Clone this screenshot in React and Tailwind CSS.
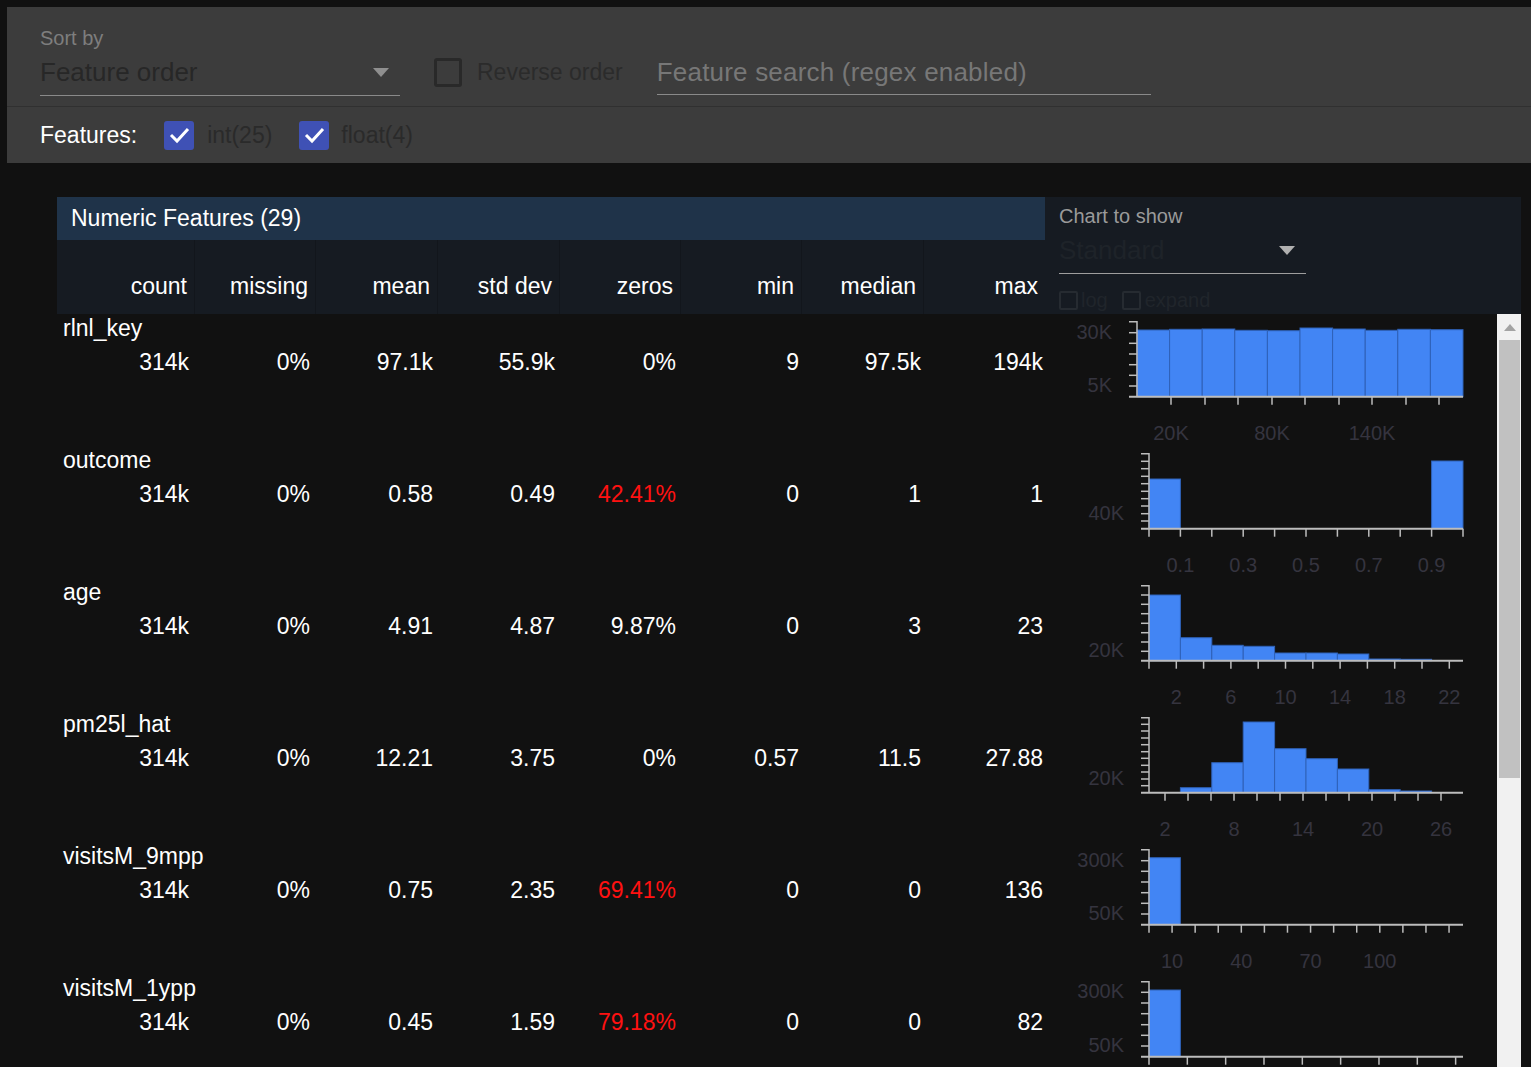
import React from "react";

const ROWS = [
  { name: "rlnl_key", vals: ["314k", "0%", "97.1k", "55.9k", "0%", "9", "97.5k", "194k"] },
  { name: "outcome", vals: ["314k", "0%", "0.58", "0.49", "42.41%", "0", "1", "1"], red: true },
  { name: "age", vals: ["314k", "0%", "4.91", "4.87", "9.87%", "0", "3", "23"] },
  { name: "pm25l_hat", vals: ["314k", "0%", "12.21", "3.75", "0%", "0.57", "11.5", "27.88"] },
  { name: "visitsM_9mpp", vals: ["314k", "0%", "0.75", "2.35", "69.41%", "0", "0", "136"], red: true },
  { name: "visitsM_1ypp", vals: ["314k", "0%", "0.45", "1.59", "79.18%", "0", "0", "82"], red: true },
];

const range = (n, start, step) => Array.from({ length: n }, (_, k) => start + k * step);

const CHARTS = [
  {
    ax: 92,
    tops: [16, 15.3, 15, 16.3, 16.7, 14, 15, 16.3, 15.3, 15.7],
    yTicks: [18.7, 29.3, 40, 50.7, 61.3, 72],
    yLabels: [[18.7, "30K"], [72, "5K"]],
    xTicks: [126, 160, 193, 227, 260, 294, 327, 361, 394],
    xLabels: [[126, "20K"], [227, "80K"], [327, "140K"]],
  },
  {
    ax: 104,
    tops: [33, null, null, null, null, null, null, null, null, 15],
    yTicks: [15.3, 22.7, 30.3, 37.7, 45.3, 52.7, 60, 67.7, 75],
    yLabels: [[67.7, "40K"]],
    xTicks: range(11, 104, 31.4),
    xLabels: [[135.4, "0.1"], [198.2, "0.3"], [261, "0.5"], [323.8, "0.7"], [386.6, "0.9"]],
  },
  {
    ax: 104,
    tops: [17, 59.7, 67.3, 68.3, 75, 75, 76, 81, 81.3, null],
    yTicks: [17, 26.3, 35.7, 45.3, 54.7, 64, 73.3],
    yLabels: [[73.3, "20K"]],
    xTicks: range(12, 104, 27.3),
    xLabels: [[131.3, "2"], [185.9, "6"], [240.5, "10"], [295.1, "14"], [349.7, "18"], [404.3, "22"]],
  },
  {
    ax: 104,
    tops: [null, 77.7, 52.7, 12, 38.7, 48.7, 59, 79.7, 81, null],
    yTicks: [14.3, 21, 28, 34.7, 41.7, 48.3, 55.3, 62, 69, 75.7],
    yLabels: [[69, "20K"]],
    xTicks: range(13, 120, 23),
    xLabels: [[120, "2"], [189, "8"], [258, "14"], [327, "20"], [396, "26"]],
  },
  {
    ax: 104,
    tops: [15.7],
    yTicks: [18.7, 29.3, 40, 50.7, 61.3, 72],
    yLabels: [[18.7, "300K"], [72, "50K"]],
    xTicks: range(14, 104, 23.08),
    xLabels: [[127.1, "10"], [196.3, "40"], [265.6, "70"], [334.8, "100"]],
  },
  {
    ax: 104,
    tops: [16],
    yTicks: [18.3, 29, 39.7, 50.7, 61.3, 72],
    yLabels: [[18.3, "300K"], [72, "50K"]],
    xTicks: range(9, 104, 38.33),
    xLabels: [],
  },
];

const HEADERS = ["count", "missing", "mean", "std dev", "zeros", "min", "median", "max"];

export default function App() {
  return (
    <div className="w-[1531px] h-[1067px] overflow-hidden bg-[#111111] font-['Liberation_Sans',Arial,sans-serif]">
      {/* top controls */}
      <div className="pt-[7px] pl-[7px]">
        <div className="bg-[#3c3c3c]">
          <div className="h-[100px] flex items-start pl-[33px] border-b border-[#303030]">
            <div className="w-[360px] pt-[19px]">
              <div className="text-[20px] leading-[24px] text-[#7e7e7e]">Sort by</div>
              <div className="h-[46px] flex items-center justify-between border-b border-[#8a8a8a]">
                <span className="text-[26px] text-[#272727]">Feature order</span>
                <Caret className="mr-[11px] fill-[#8f8f8f]" />
              </div>
            </div>
            <div className="ml-[34px] mt-[43px] h-[44px] flex items-center">
              <div className="w-[28px] h-[29px] border-[3px] border-[#292929] rounded-[3px]" />
              <span className="ml-[15px] text-[23px] text-[#2b2b2b]">Reverse order</span>
            </div>
            <div className="ml-[34px] mt-[43px] w-[494px] h-[45px] flex items-center border-b border-[#8a8a8a]">
              <span className="text-[26px] text-[#777777] tracking-[0.2px]">Feature search (regex enabled)</span>
            </div>
          </div>
          <div className="h-[56px] flex items-center pl-[33px]">
            <span className="text-[23px] text-white">Features:</span>
            <Checked className="ml-[27px]" />
            <span className="ml-[13px] text-[23px] text-[#2a2a2a]">int(25)</span>
            <Checked className="ml-[27px]" />
            <span className="ml-[12px] text-[23px] text-[#2a2a2a]">float(4)</span>
          </div>
        </div>
      </div>

      {/* table */}
      <div className="mt-[34px] ml-[57px] w-[1464px]">
        <div className="flex">
          <div className="w-[988px]">
            <div className="h-[43px] bg-[#1f3349] flex items-center pl-[14px] text-[23px] text-white">
              Numeric Features (29)
            </div>
            <div className="h-[74px] bg-[#161b22] pl-[16px] grid grid-cols-[122px_121px_122px_122px_121px_121px_122px_121px]">
              {HEADERS.map((h, k) => (
                <div
                  key={h}
                  className={
                    "flex items-end justify-end pr-[7px] pb-[15px] text-[23px] leading-[26px] text-white " +
                    (k < HEADERS.length - 1 ? "border-r border-[#12161c]" : "")
                  }
                >
                  {h}
                </div>
              ))}
            </div>
          </div>
          <div className="w-[476px] h-[117px] overflow-hidden bg-[#161b22] pl-[14px]">
            <div className="pt-[7px] text-[20px] leading-[24px] text-[#9a9a9a]">Chart to show</div>
            <div className="w-[247px] h-[46px] flex items-center justify-between border-b border-[#9e9e9e]">
              <span className="text-[26px] text-[#1e2329]">Standard</span>
              <Caret className="mr-[11px] fill-[#b0b0b0]" />
            </div>
            <div className="mt-[16px] flex items-center text-[20px] leading-[20px] text-[#20252b]">
              <div className="w-[19px] h-[19px] border-2 border-[#262b31] rounded-[2px]" />
              <span className="ml-[3px]">log</span>
              <div className="ml-[14px] w-[19px] h-[19px] border-2 border-[#262b31] rounded-[2px]" />
              <span className="ml-[4px]">expand</span>
            </div>
          </div>
        </div>

        <div className="flex h-[753px] overflow-hidden">
          <div className="w-[1440px]">
            {ROWS.map((r, i) => (
              <div key={r.name} className="h-[132px] flex">
                <div className="w-[988px] text-[23px] leading-[26px] text-white">
                  <div className="pt-[1px] pl-[6px]">{r.name}</div>
                  <div className="mt-[8px] pl-[16px] grid grid-cols-[116px_121px_123px_122px_121px_123px_122px_122px]">
                    {r.vals.map((v, k) => (
                      <div key={k} className={"text-right " + (k === 4 && r.red ? "text-[#ff1111]" : "")}>
                        {v}
                      </div>
                    ))}
                  </div>
                </div>
                <Chart {...CHARTS[i]} />
              </div>
            ))}
          </div>
          <div className="w-[24px] bg-[#f1f1f1] pl-[2px] pr-[1px]">
            <div className="h-[26px] flex items-center justify-center">
              <svg width="12" height="7" viewBox="0 0 12 7">
                <path d="M0 7 L6 0 L12 7 Z" fill="#a3a3a3" />
              </svg>
            </div>
            <div className="h-[438px] bg-[#c1c1c1]" />
          </div>
        </div>
      </div>
    </div>
  );
}

function Caret({ className }) {
  return (
    <svg width="16" height="9" viewBox="0 0 16 9" className={className}>
      <path d="M0 0 H16 L8 9 Z" />
    </svg>
  );
}

function Checked({ className }) {
  return (
    <div className={"w-[30px] h-[29px] bg-[#3f51b5] rounded-[3px] flex items-center justify-center " + className}>
      <svg width="22" height="18" viewBox="0 0 22 18">
        <path d="M3 9 L9 15 L20 3" fill="none" stroke="white" strokeWidth="3" />
      </svg>
    </div>
  );
}

function Chart({ ax, tops, yTicks, yLabels, xTicks, xLabels }) {
  const top = 7.7;
  const bottom = 82.7;
  const right = 418;
  const binW = (right - ax) / 10;
  const axis = "#bdbdbd";
  const label = "#35343f";
  return (
    <svg width="452" height="132" className="shrink-0">
      {tops.map((t, k) =>
        t == null ? null : (
          <rect key={k} x={ax + k * binW} y={t} width={binW} height={bottom - t} fill="#4285f4" stroke="#2f62b8" strokeWidth="1" />
        )
      )}
      <path d={`M${ax - 8} ${top} H${ax} V${bottom}`} fill="none" stroke={axis} strokeWidth="1.5" />
      <line x1={ax - 8} x2={right} y1={bottom} y2={bottom} stroke={axis} strokeWidth="2" />
      {yTicks.map((y) => (
        <line key={y} x1={ax - 8} x2={ax} y1={y} y2={y} stroke={axis} strokeWidth="1.5" />
      ))}
      {xTicks.map((x) => (
        <line key={x} x1={x} x2={x} y1={bottom} y2={bottom + 8} stroke={axis} strokeWidth="1.5" />
      ))}
      {yLabels.map(([y, t]) => (
        <text key={t} x={ax - 25} y={y - 1} textAnchor="end" dominantBaseline="central" fontSize="20" fill={label}>
          {t}
        </text>
      ))}
      {xLabels.map(([x, t]) => (
        <text key={t} x={x} y={119} textAnchor="middle" dominantBaseline="central" fontSize="20" fill={label}>
          {t}
        </text>
      ))}
    </svg>
  );
}
